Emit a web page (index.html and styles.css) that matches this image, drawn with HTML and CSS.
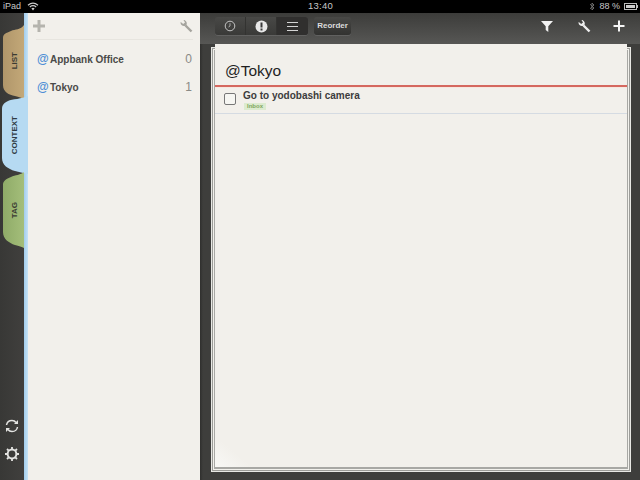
FILE: index.html
```html
<!DOCTYPE html>
<html lang="en">
<head>
<meta charset="utf-8">
<title>Tasks</title>
<link rel="stylesheet" href="styles.css">
</head>
<body>
<header class="status">
  <div class="status-left"><span>iPad</span>
    <svg class="wifi" width="12" height="9" viewBox="0 0 12 9"><path d="M1 3.200C4 .6 8 .6 11 3.200M2.800 5C4.800 3.400 7.200 3.400 9.200 5" fill="none" stroke="#ccc" stroke-width="1.200"/><path d="M4.400 6.400 6 8.400l1.600-2C6.600 5.700 5.400 5.700 4.400 6.400z" fill="#ccc"/></svg>
  </div>
  <div class="status-time">13:40</div>
  <div class="status-right">
    <svg width="6" height="9" viewBox="0 0 6 9"><path d="M1 2.200 5 6 3 8V1l2 2-4 3.800" fill="none" stroke="#777" stroke-width=".9"/></svg>
    <span>88 %</span>
    <svg width="14" height="7" viewBox="0 0 14 7"><rect x=".5" y=".5" width="12" height="6" fill="none" stroke="#bbb"/><rect x="2" y="2" width="9" height="3" fill="#ccc"/><rect x="13" y="2" width="1" height="3" fill="#bbb"/></svg>
  </div>
</header>
<div class="app">
  <nav class="rail">
    <div class="tabs">
      <div class="tab tab-list">
        <svg class="tab-shape" width="21" height="74" viewBox="0 0 21 74"><defs><linearGradient id="gl" x1="0" x2="1" y1="0" y2="0"><stop offset="0" stop-color="#b0966a"/><stop offset="1" stop-color="#c3a878"/></linearGradient></defs><path d="M21 0C18 5 12 4 8 6 3 8 0 9 0 13V60C0 67 6 70 12 71 16 72 19 73 21 74Z" fill="url(#gl)"/></svg>
        <span>LIST</span>
      </div>
      <div class="tab tab-context">
        <svg class="tab-shape" width="26" height="78" viewBox="0 0 26 78"><path d="M26 0C20 3 10 3 6 5 2 7 0 9 0 13V62C0 69 6 73 13 75 17 76 21 77 26 78Z" fill="#b6daf2"/></svg>
        <span>CONTEXT</span>
      </div>
      <div class="tab tab-tag">
        <svg class="tab-shape" width="21" height="76" viewBox="0 0 21 76"><defs><linearGradient id="gt" x1="0" x2="1" y1="0" y2="0"><stop offset="0" stop-color="#8fab68"/><stop offset="1" stop-color="#a4be7a"/></linearGradient></defs><path d="M21 0C18 3 12 3 8 5 3 7 0 9 0 13V60C0 67 6 71 12 73 16 74 19 75 21 76Z" fill="url(#gt)"/></svg>
        <span>TAG</span>
      </div>
    </div>
    <div class="rail-tools">
      <svg width="16" height="16" viewBox="0 0 16 16"><path d="M2.500 7C3 4 5.200 2.500 8 2.500c1.700 0 3.100.7 4 2M13.500 9c-.5 3-2.700 4.500-5.500 4.500-1.700 0-3.100-.7-4-2" fill="none" stroke="#e4e4e2" stroke-width="1.500"/><path d="M14 2v4h-4zM2 14v-4h4z" fill="#e4e4e2"/></svg>
      <svg width="16" height="16" viewBox="0 0 16 16"><circle cx="8" cy="8" r="4.400" fill="none" stroke="#e4e4e2" stroke-width="2"/><path d="M8 1v2.400M8 12.600V15M1 8h2.400M12.600 8H15M3 3l1.700 1.700M11.300 11.300 13 13M13 3l-1.700 1.700M4.700 11.300 3 13" stroke="#e4e4e2" stroke-width="1.800"/></svg>
    </div>
  </nav>
  <aside class="sidebar">
    <div class="side-head">
      <svg class="side-plus" width="14" height="14" viewBox="0 0 14 14"><path d="M5.500 1h3v4.500H13v3H8.500V13h-3V8.500H1v-3h4.500z" fill="#b5b4ae"/></svg>
      <svg width="14" height="14" viewBox="0 0 14 14"><path d="M6.500 6.500 12.500 12.500" stroke="#a5a49e" stroke-width="2.400"/><path d="M1.500 3.500C1.500 6.500 4.500 8 7 6.500 8.500 5 8 2.500 5.500 1H4.500L6 3.500 4.200 5 1.800 3z" fill="#a5a49e"/></svg>
    </div>
    <ul class="contexts">
      <li><span class="at">@</span><span class="ctx-name">Appbank Office</span><span class="ctx-count">0</span></li>
      <li><span class="at">@</span><span class="ctx-name">Tokyo</span><span class="ctx-count">1</span></li>
    </ul>
  </aside>
  <main class="main">
    <div class="toolbar">
      <div class="segments">
        <div class="seg"><svg width="12" height="12" viewBox="0 0 12 12"><circle cx="6" cy="6" r="4.800" fill="none" stroke="#c4c4c4" stroke-width="1"/><path d="M6 3.200V6l-1.500 1" fill="none" stroke="#c4c4c4" stroke-width=".8"/></svg></div>
        <div class="seg"><svg width="13" height="13" viewBox="0 0 13 13"><circle cx="6.500" cy="6.500" r="6" fill="#e8e8e8"/><rect x="5.500" y="2.500" width="2" height="5" fill="#3a3a3a"/><rect x="5.500" y="8.500" width="2" height="2" fill="#3a3a3a"/></svg></div>
        <div class="seg seg-on"><svg width="13" height="11" viewBox="0 0 13 11"><path d="M1 1.500h11M1 5.500h11M1 9.500h11" stroke="#d4d4d4" stroke-width="1.200"/></svg></div>
      </div>
      <div class="reorder">Reorder</div>
      <div class="tool-right">
        <svg width="14" height="14" viewBox="0 0 14 14"><path d="M1 2h12L8.300 7.300V13L5.700 11V7.300z" fill="#f2f2f2"/></svg>
        <svg width="14" height="14" viewBox="0 0 14 14"><path d="M6.500 6.500 12.500 12.500" stroke="#eee" stroke-width="2.400"/><path d="M1.500 3.500C1.500 6.500 4.500 8 7 6.500 8.500 5 8 2.500 5.500 1H4.500L6 3.500 4.200 5 1.800 3z" fill="#eee"/></svg>
        <svg width="12" height="12" viewBox="0 0 12 12"><path d="M5 .5h2V5h4.500v2H7v4.500H5V7H.5V5H5z" fill="#f6f6f6"/></svg>
      </div>
    </div>
    <div class="paper">
      <div class="sheet">
        <h1 class="title">@Tokyo</h1>
        <div class="task">
          <span class="check"></span>
          <div class="task-body">
            <div class="task-name">Go to yodobashi camera</div>
            <span class="badge">Inbox</span>
          </div>
        </div>
      </div>
    </div>
  </main>
</div>
</body>
</html>
```
FILE: styles.css
```css
* { box-sizing: border-box; }
html, body { margin: 0; padding: 0; }
body {
  width: 640px;
  height: 480px;
  overflow: hidden;
  background: #3c3c3a;
  font-family: "Liberation Sans", Arial, sans-serif;
}
svg { display: block; }

.status {
  height: 13px;
  background: #000;
  color: #c8c8c8;
  font-size: 9px;
  line-height: 11px;
  display: grid;
  grid-template-columns: 1fr auto 1fr;
  padding: 0 2px 1px 3px;
}
.status-left { display: flex; align-items: center; gap: 6px; }
.status-time { font-size: 9.5px; letter-spacing: .2px; }
.status-right { display: flex; align-items: center; justify-content: flex-end; gap: 4px; }

.app { display: flex; height: 467px; }

.rail {
  width: 28px;
  flex: none;
  display: flex;
  flex-direction: column;
  justify-content: space-between;
  background: linear-gradient(90deg, #383836 0, #403f3d 23px, #403f3d 24px, #a3cdec 24px, #c6e3f6 28px);
}
.tabs { display: flex; flex-direction: column; padding-top: 12px; padding-left: 3px; }
.tab {
  position: relative;
  display: flex;
  align-items: center;
  justify-content: center;
  width: 21px;
  height: 74px;
  color: #3b3b33;
  font-size: 8px;
  font-weight: 700;
}
.tab-shape { position: absolute; left: 0; top: 0; }
.tab span { position: relative; writing-mode: vertical-rl; transform: rotate(180deg) translate(-1px, 0); padding-bottom: 1px; }
.tab-list span { transform: rotate(180deg) translate(-1px, 2px); }
.tab-context {
  width: 25px;
  height: 78px;
  margin: -3px 0 0 -1px;
  color: #2f3a44;
  padding-right: 2px;
}
.tab-tag { height: 76px; margin-top: -2px; }
.rail-tools {
  display: flex;
  flex-direction: column;
  align-items: flex-start;
  gap: 12px;
  padding: 0 0 18px 4px;
}

.sidebar {
  width: 172px;
  flex: none;
  background: #f2f0eb;
  padding: 0 7px 0 8px;
}
.side-head {
  height: 27px;
  display: flex;
  align-items: center;
  justify-content: space-between;
  border-bottom: 1px solid #e7e5df;
}
.side-plus { margin-left: -4px; }
.contexts { list-style: none; margin: 0; padding: 5px 0 0 1px; }
.contexts li {
  height: 28px;
  display: flex;
  align-items: center;
  font-size: 10px;
  font-weight: 700;
  color: #4a4a48;
}
.at { color: #4f8fd6; font-size: 12px; width: 13px; font-weight: 700; }
.ctx-name { flex: 1; }
.ctx-count { color: #8a8a86; font-weight: 400; font-size: 12px; padding-right: 1px; }

.main {
  flex: 1;
  display: flex;
  flex-direction: column;
  background: linear-gradient(90deg, #2f2f2e 0, #3e3e3c 3px);
}
.toolbar {
  height: 31px;
  flex: none;
  display: flex;
  align-items: center;
  padding: 0 15px 5px 15px;
  background: linear-gradient(180deg, #3c3c3a 0, #575755 100%);
}
.segments { display: flex; height: 18px; background: linear-gradient(180deg, #484846, #3a3a38); border-radius: 3px; box-shadow: 0 1px 0 #616160; }
.seg {
  width: 31px;
  display: flex;
  align-items: center;
  justify-content: center;
  border-right: 1px solid #333331;
}
.seg-on { background: #302f2e; border-right: 0; border-radius: 0 3px 3px 0; }
.reorder {
  margin-left: 6px;
  width: 37px;
  height: 18px;
  line-height: 18px;
  text-align: center;
  background: linear-gradient(180deg, #484846, #323230);
  border-radius: 3px;
  box-shadow: 0 1px 0 #616160;
  color: #dcdcdc;
  font-size: 8px;
  font-weight: 700;
}
.tool-right {
  margin-left: auto;
  display: flex;
  align-items: center;
  gap: 22.5px;
}
.paper {
  width: 412px;
  height: 417px;
  margin: 6px 0 0 15px;
  background: #f2f0eb;
  box-shadow:
    0 1px 0 1px #a8a8a4,
    0 1px 0 2px #f2f1ec,
    0 1px 0 3px #9c9c98,
    0 1px 0 4px #e8e8e4;
}
.sheet {
  height: 423px;
  margin-top: -6px;
  position: relative;
  background: linear-gradient(40deg, #f8f8f5 0, #f2f0eb 24px);
}
.title {
  margin: 0;
  height: 43px;
  padding: 17px 0 0 10px;
  font-size: 15.5px;
  line-height: 20px;
  font-weight: 400;
  color: #1f1f1f;
  border-bottom: 2px solid #d5685f;
  box-shadow: 0 1px 0 #f7e7df;
}
.task {
  height: 27px;
  display: flex;
  align-items: flex-start;
  padding: 6px 0 0 9px;
  border-bottom: 1px solid #d5dbe2;
}
.check {
  width: 12px;
  height: 12px;
  border: 1px solid #777;
  border-radius: 2px;
  background: #f6f6f2;
  flex: none;
}
.task-body { margin-left: 7px; margin-top: -4px; }
.task-name { font-size: 10px; line-height: 13px; font-weight: 700; color: #3c3c3c; }
.badge {
  display: block;
  width: 22px;
  height: 7px;
  margin: 1px 0 0 1px;
  background: #dcebcf;
  color: #7fa55e;
  font-size: 6px;
  line-height: 7px;
  font-weight: 700;
  text-align: center;
}
```
